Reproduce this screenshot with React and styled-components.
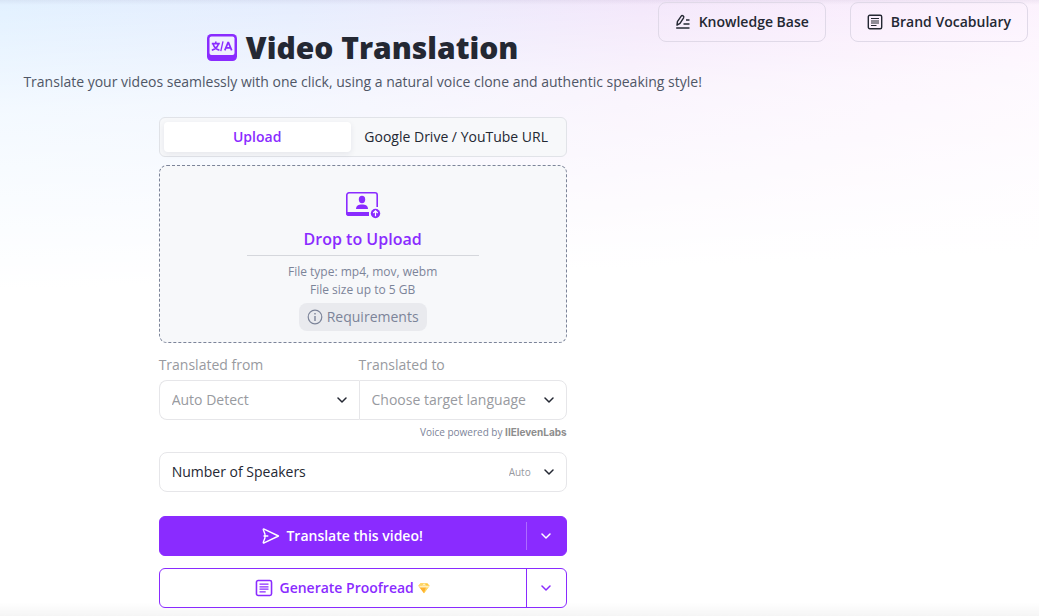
import React, { useState } from "react";
import styled, { createGlobalStyle, css } from "styled-components";

const App = () => {
  const [tab, setTab] = useState("upload");

  return (
    <>
      <GlobalStyle />
      <Page>
        <Main>
          <Title>
            <LogoIcon />
            Video Translation
          </Title>
          <SubTitle>
            Translate your videos seamlessly with one click, using a natural
            voice clone and authentic speaking style!
          </SubTitle>
          <Form onSubmit={(e) => e.preventDefault()}>
            <Tabs role="tablist">
              <Tab
                type="button"
                role="tab"
                aria-selected={tab === "upload"}
                $active={tab === "upload"}
                onClick={() => setTab("upload")}
              >
                Upload
              </Tab>
              <Tab
                type="button"
                role="tab"
                aria-selected={tab === "url"}
                $active={tab === "url"}
                onClick={() => setTab("url")}
              >
                Google Drive / YouTube URL
              </Tab>
            </Tabs>

            <DropZone>
              <UploadIcon />
              <DropButton type="button">Drop to Upload</DropButton>
              <FileInfo>
                File type: mp4, mov, webm
                <br />
                File size up to 5 GB
              </FileInfo>
              <Requirements type="button">
                <InfoIcon />
                Requirements
              </Requirements>
            </DropZone>

            <Languages>
              <FieldLabel htmlFor="from">Translated from</FieldLabel>
              <FieldLabel htmlFor="to">Translated to</FieldLabel>
              <SelectBox $side="left">
                <Select id="from">
                  <option>Auto Detect</option>
                </Select>
                <Chevron />
              </SelectBox>
              <SelectBox $side="right">
                <Select id="to">
                  <option>Choose target language</option>
                </Select>
                <Chevron />
              </SelectBox>
            </Languages>
            <Powered>
              Voice powered by <b>IIElevenLabs</b>
            </Powered>

            <SelectBox>
              <SpeakerLabel htmlFor="speakers">Number of Speakers</SpeakerLabel>
              <Select id="speakers" $small>
                <option>Auto</option>
              </Select>
              <Chevron />
            </SelectBox>

            <Split $filled>
              <SplitMain type="submit">
                <SendIcon />
                Translate this video!
              </SplitMain>
              <SplitMore type="button" aria-label="More translate options">
                <Chevron />
              </SplitMore>
            </Split>
            <Split>
              <SplitMain type="button">
                <DocIcon size={18} />
                <ProofText>
                  Generate Proofread
                  <GemIcon />
                </ProofText>
              </SplitMain>
              <SplitMore type="button" aria-label="More proofread options">
                <Chevron />
              </SplitMore>
            </Split>
          </Form>
        </Main>
        <Actions>
          <ActionButton type="button">
            <PenIcon />
            Knowledge Base
          </ActionButton>
          <ActionButton type="button">
            <DocIcon size={16} />
            Brand Vocabulary
          </ActionButton>
        </Actions>
      </Page>
    </>
  );
};

export default App;

const LogoIcon = () => (
  <svg width="30" height="28" viewBox="0 0 30 28" fill="none">
    <rect width="30" height="27" rx="4.5" fill="#8a2bff" />
    <rect x="2.5" y="2.5" width="25" height="18.5" rx="2" fill="#f0f0fe" />
    <g stroke="#8a2bff" strokeWidth="1.6">
      <path d="M4.800 9.600h8M8.800 7.600v2M6.100 10c.9 3 3 5.200 6.300 6.200M11.400 10c-.9 3-3 5.200-6.600 6.200" />
      <path d="M13.800 17.200l2.200-9.800" strokeWidth="1.300" />
      <path d="M17.800 16.400l3.200-7.800h.5l3.200 7.800M19 13.800h4.500" strokeWidth="1.700" />
    </g>
  </svg>
);

const UploadIcon = () => (
  <svg width="36" height="28" viewBox="0 0 36 28" fill="none">
    <path
      d="M32.200 16V4a2.200 2.200 0 0 0-2.200-2.200H4A2.200 2.200 0 0 0 1.800 4v18A2.200 2.200 0 0 0 4 24.200H24"
      stroke="#8a2bff"
      strokeWidth="1.600"
    />
    <path d="M1 21h23v4H4a3 3 0 0 1-3-3z" fill="#8a2bff" />
    <ellipse cx="17" cy="8.500" rx="3.200" ry="3.700" fill="#8a2bff" />
    <path d="M11 18c0-3.500 2.500-4.600 6-4.600s6 1.100 6 4.600z" fill="#8a2bff" />
    <circle cx="30.500" cy="22.500" r="4.700" fill="#8a2bff" />
    <path d="M30.500 25.200v-5M28.300 22l2.200-2.200 2.200 2.200" stroke="#fff" strokeWidth="1.200" />
  </svg>
);

const InfoIcon = () => (
  <svg width="16" height="16" viewBox="0 0 16 16" fill="none" stroke="currentColor">
    <circle cx="8" cy="8" r="6.800" strokeWidth="1.200" />
    <path d="M8 7v5M8 4v1.500" strokeWidth="1.400" />
  </svg>
);

const Chevron = () => (
  <ChevronSvg width="10" height="6" viewBox="0 0 10 6" fill="none">
    <path
      d="M1 1l4 4 4-4"
      stroke="currentColor"
      strokeWidth="1.500"
      strokeLinecap="round"
      strokeLinejoin="round"
    />
  </ChevronSvg>
);

const SendIcon = () => (
  <svg width="18" height="16" viewBox="0 0 18 16" fill="none">
    <path
      d="M3 6.200L1.300 1.800c-.2-.6.200-1 .8-.7L16.500 8 2.100 14.900c-.6.300-1-.1-.8-.7L3 9.800M1.500 8h4.800M3 6.200V9.800"
      stroke="currentColor"
      strokeWidth="1.400"
      strokeLinejoin="round"
    />
  </svg>
);

const DocIcon = ({ size }) => (
  <svg width={size} height={size} viewBox="0 0 16 16" fill="none" stroke="currentColor">
    <rect x="1.300" y="1.300" width="13.400" height="13.400" rx="1.500" strokeWidth="1.400" />
    <path d="M4 4.500h8M4 7h8M4 9h8M4 11.500h5.500" strokeWidth="1.200" />
  </svg>
);

const PenIcon = () => (
  <svg width="16" height="16" viewBox="0 0 16 16" fill="none" stroke="currentColor">
    <path
      d="M2 11.200l.4-3.500 3.800-5.600c1-1.300 3.300.2 2.400 1.700L5 9.400z"
      strokeWidth="1.400"
      strokeLinejoin="round"
    />
    <path d="M1.200 14h13.300M8.500 10h6M11 6h3.500" strokeWidth="1.400" />
  </svg>
);

const GemIcon = () => (
  <svg width="12" height="12" viewBox="0 0 14 13">
    <path d="M3 1h8l2.500 3L7 12.500.5 4z" fill="#ffc83d" />
    <path d="M.5 4H4l3 8.500z" fill="#ffb02e" />
    <path d="M4 4l3-3 3 3z" fill="#fff0bd" />
    <path d="M4 4h6l-3 8.500z" fill="#ffb02e" />
    <path d="M10 4h3.500L7 12.500z" fill="#ffd766" />
    <path d="M3 1h4L4 4H.5z" fill="#ffd766" />
    <path d="M.8 4h12.400L12 6H2.200z" fill="#fff0bd" />
  </svg>
);

const GlobalStyle = createGlobalStyle`
  * {
    box-sizing: border-box;
  }
  body {
    margin: 0;
    min-height: 100vh;
    color: #242833;
    font-family: "Open Sans", "Noto Sans", sans-serif;
    font-size: 14px;
    line-height: 20px;
    background:
      linear-gradient(to top, rgba(0, 0, 0, 0.04), transparent 14px),
      linear-gradient(to bottom, rgba(60, 40, 100, 0.06), transparent 5px),
      linear-gradient(178deg, transparent, rgba(255, 255, 255, 0.6) 110px, #fff 290px),
      linear-gradient(100deg, #e2f1ff 0%, #e4ecfe 26%, #f2e4fa 56%, #f9eafc 78%, #fdf2fe 100%);
    background-color: #fff;
    background-repeat: no-repeat;
  }
  button,
  select {
    margin: 0;
    padding: 0;
    border: 0;
    background: none;
    color: inherit;
    font: inherit;
    cursor: pointer;
  }
  svg {
    flex: none;
  }
`;

const Page = styled.div`
  display: flex;
  align-items: flex-start;
`;

const Main = styled.main`
  width: 70%;
  padding: 28px 13px 8px 11px;
  display: flex;
  flex-direction: column;
  align-items: center;
`;

const Title = styled.h1`
  margin: 0;
  display: flex;
  align-items: center;
  gap: 9px;
  font-size: 30px;
  font-weight: 800;
  line-height: 40px;
`;

const SubTitle = styled.p`
  margin: 4px 0 25px;
  color: #4f5666;
  font-weight: 500;
  text-align: center;
`;

const Form = styled.form`
  width: 100%;
  max-width: 408px;
`;

const Tabs = styled.div`
  height: 40px;
  padding: 4px;
  display: grid;
  grid-template-columns: 47% 53%;
  border: 1px solid #e1e3e8;
  border-radius: 6px;
  background: #f7f8fa;
`;

const Tab = styled.button`
  border-radius: 4px;
  font-weight: 500;
  ${({ $active }) =>
    $active &&
    css`
      color: #8a2bff;
      font-weight: 600;
      background: #fff;
      box-shadow: 0 2px 6px rgba(30, 30, 60, 0.08);
    `}
`;

const DropZone = styled.div`
  margin-top: 8px;
  padding: 25px 16px 11px;
  display: flex;
  flex-direction: column;
  align-items: center;
  border: 1px dashed #7c8499;
  border-radius: 8px;
  background: #f7f8fa;
`;

const DropButton = styled.button`
  width: 232px;
  margin-top: 8px;
  padding-bottom: 4px;
  border-bottom: 1px solid #d5d7dc;
  color: #8a2bff;
  font-size: 16px;
  font-weight: 600;
  line-height: 24px;
`;

const FileInfo = styled.p`
  margin: 7px 0 4px;
  color: #7c8499;
  font-size: 12px;
  font-weight: 500;
  line-height: 18px;
  text-align: center;
`;

const Requirements = styled.button`
  height: 28px;
  padding: 0 8px;
  display: flex;
  align-items: center;
  gap: 4px;
  border-radius: 8px;
  background: #e9eaee;
  color: #7c8499;
`;

const Languages = styled.div`
  margin-top: 12px;
  display: grid;
  grid-template-columns: 49% 51%;
  row-gap: 5px;
`;

const FieldLabel = styled.label`
  color: #989aa0;
`;

const ChevronSvg = styled.svg`
  pointer-events: none;
`;

const SelectBox = styled.div`
  height: 40px;
  padding: 0 12px;
  display: flex;
  align-items: center;
  border: 1px solid #e6e6e9;
  border-radius: 8px;
  background: #fff;
  ${({ $side }) =>
    $side === "left" &&
    css`
      border-right: 0;
      border-radius: 8px 0 0 8px;
    `}
  ${({ $side }) => $side === "right" && "border-radius: 0 8px 8px 0;"}
`;

const Select = styled.select`
  flex: ${({ $small }) => ($small ? "none" : "1")};
  min-width: 0;
  margin-right: ${({ $small }) => ($small ? "12px" : "0")};
  appearance: none;
  color: #989aa0;
  font-size: ${({ $small }) => ($small ? "10px" : "14px")};
`;

const SpeakerLabel = styled.label`
  flex: 1;
`;

const Powered = styled.p`
  margin: 4px 0 12px;
  color: #7c8499;
  font-size: 10px;
  line-height: 16px;
  text-align: right;
  b {
    color: #8d8d8d;
    font-family: "Inter", sans-serif;
  }
`;

const SplitMain = styled.button`
  flex: 1;
  display: flex;
  align-items: center;
  justify-content: center;
  gap: 6px;
`;

const ProofText = styled.span`
  display: flex;
  align-items: center;
  gap: 4px;
`;

const SplitMore = styled.button`
  width: 40px;
  display: flex;
  align-items: center;
  justify-content: center;
  border-left: 1px solid #8a2bff;
`;

const Split = styled.div`
  height: 40px;
  margin-top: 12px;
  display: flex;
  border: 1px solid #8a2bff;
  border-radius: 6px;
  background: #fff;
  color: #8a2bff;
  font-weight: 600;
  ${({ $filled }) =>
    $filled &&
    css`
      margin-top: 24px;
      background: #8a2bff;
      color: #fff;
      ${SplitMore} {
        margin: 5px 0;
        border-color: #ad6bff;
      }
    `}
`;

const Actions = styled.nav`
  width: 30%;
  padding: 2px 11px 0 0;
  display: flex;
  justify-content: flex-end;
  gap: 24px;
`;

const ActionButton = styled.button`
  height: 40px;
  padding: 0 16px;
  display: flex;
  flex: none;
  align-items: center;
  gap: 8px;
  border: 1px solid #e0d9e8;
  border-radius: 8px;
  font-weight: 600;
  white-space: nowrap;
`;
